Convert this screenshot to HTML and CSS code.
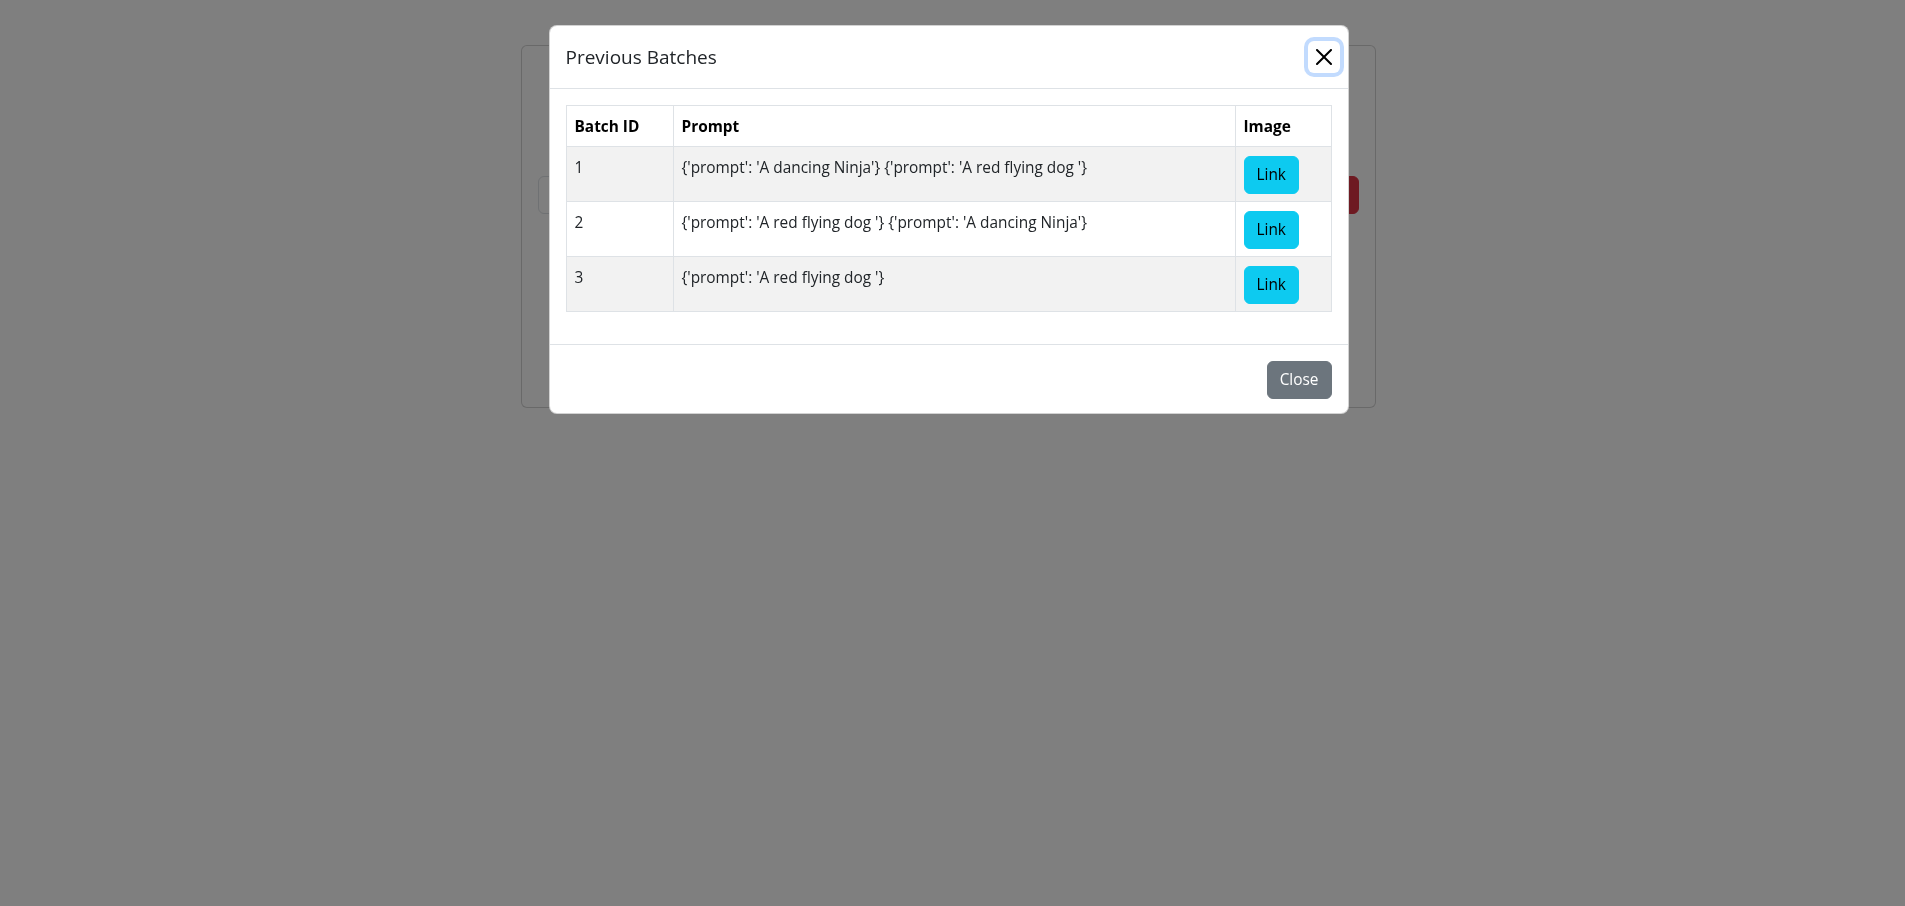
FILE: index.html
```html
<!DOCTYPE html>
<html lang="en">
<head>
<meta charset="utf-8">
<title>Batches</title>
<link rel="stylesheet" href="styles.css">
</head>
<body>
<div class="page">
  <div class="card">
    <div class="card-body">
      <h2 class="card-title">Image Generator</h2>
      <p class="card-text">Enter a prompt to generate a new batch of images.</p>
      <div class="input-group">
        <input class="form-control" type="text" placeholder="Enter a prompt">
        <button class="btn btn-danger" type="button">Generate</button>
      </div>
      <div class="card-actions">
        <button class="btn btn-primary" type="button">Previous Batches</button>
      </div>
    </div>
  </div>
</div>

<div class="backdrop"></div>

<div class="modal">
  <div class="modal-dialog">
    <div class="modal-content">
      <div class="modal-header">
        <h5 class="modal-title">Previous Batches</h5>
        <button class="btn-close" type="button" aria-label="Close">
          <svg viewBox="0 0 16 16" width="16" height="16" aria-hidden="true"><path d="M.293.293a1 1 0 0 1 1.414 0L8 6.586 14.293.293a1 1 0 1 1 1.414 1.414L9.414 8l6.293 6.293a1 1 0 0 1-1.414 1.414L8 9.414l-6.293 6.293a1 1 0 0 1-1.414-1.414L6.586 8 .293 1.707a1 1 0 0 1 0-1.414z"/></svg>
        </button>
      </div>
      <div class="modal-body">
        <table class="table">
          <thead>
            <tr><th class="col-id">Batch ID</th><th>Prompt</th><th class="col-img">Image</th></tr>
          </thead>
          <tbody>
            <tr><td>1</td><td>{'prompt': 'A dancing Ninja'} {'prompt': 'A red flying dog '}</td><td><button class="btn btn-info" type="button">Link</button></td></tr>
            <tr><td>2</td><td>{'prompt': 'A red flying dog '} {'prompt': 'A dancing Ninja'}</td><td><button class="btn btn-info" type="button">Link</button></td></tr>
            <tr><td>3</td><td>{'prompt': 'A red flying dog '}</td><td><button class="btn btn-info" type="button">Link</button></td></tr>
          </tbody>
        </table>
      </div>
      <div class="modal-footer">
        <button class="btn btn-secondary" type="button">Close</button>
      </div>
    </div>
  </div>
</div>
</body>
</html>
```
FILE: styles.css
```css
* { box-sizing: border-box; }

body {
  margin: 0;
  background: #fff;
  font-family: "Open Sans", "Noto Sans", sans-serif;
  font-size: 15.4px;
  line-height: 24px;
  color: #212529;
}

.page {
  padding: 45px 8px 0 0;
}

.card {
  width: 855px;
  height: 363px;
  margin: 0 auto;
  border: 1px solid rgba(0, 0, 0, 0.175);
  border-radius: 6px;
  background: #fff;
}

.card-body {
  padding: 16px;
}

.card-title {
  margin: 20px 0 10px;
  font-size: 28px;
  font-weight: 500;
  line-height: 36px;
  text-align: center;
}

.card-text {
  margin: 0 0 24px;
  text-align: center;
}

.input-group {
  display: flex;
}

.form-control {
  flex: 1;
  height: 38px;
  padding: 6px 12px;
  border: 1px solid #dee2e6;
  border-radius: 6px 0 0 6px;
  font: inherit;
  color: #212529;
}

.btn {
  display: inline-block;
  padding: 6px 12px;
  border: 1px solid transparent;
  border-radius: 6px;
  font-family: inherit;
  font-size: 15.4px;
  line-height: 24px;
  cursor: pointer;
}

.input-group .btn {
  border-radius: 0 6px 6px 0;
}

.btn-danger { background: #dc3545; border-color: #dc3545; color: #fff; }
.btn-primary { background: #0d6efd; border-color: #0d6efd; color: #fff; }
.btn-info { background: #0dcaf0; border-color: #0dcaf0; color: #000; }
.btn-secondary { background: #6c757d; border-color: #6c757d; color: #fff; }

.card-actions {
  margin-top: 60px;
  text-align: center;
}

.backdrop {
  position: fixed;
  inset: 0;
  background: rgba(0, 0, 0, 0.5);
}

.modal {
  position: fixed;
  inset: 0;
  padding-right: 8px;
}

.modal-dialog {
  width: 800px;
  margin: 25px auto 0;
}

.modal-content {
  background: #fff;
  border: 1px solid rgba(0, 0, 0, 0.175);
  border-radius: 8px;
}

.modal-header {
  display: flex;
  align-items: center;
  padding: 16px;
  border-bottom: 1px solid #dee2e6;
}

.modal-title {
  margin: 0;
  font-size: 19px;
  font-weight: 500;
  line-height: 30px;
  color: #212529;
}

.btn-close {
  display: flex;
  align-items: center;
  justify-content: center;
  width: 32px;
  height: 32px;
  margin: -8px -8px -8px auto;
  padding: 8px;
  border: 0;
  border-radius: 6px;
  background: #fff;
  box-shadow: 0 0 0 4px rgba(13, 110, 253, 0.25);
  cursor: pointer;
}

.btn-close svg {
  display: block;
  fill: #000;
}

.modal-body {
  padding: 16px;
}

.table {
  width: 100%;
  margin-bottom: 16px;
  border-collapse: collapse;
  border: 1px solid #dee2e6;
}

.table th,
.table td {
  padding: 9px 8px 7px;
  border: 1px solid #dee2e6;
  text-align: left;
  vertical-align: top;
}

.table th {
  font-weight: 700;
  color: #000;
}

.table .col-id { width: 107px; }
.table .col-img { width: 96px; }

.table tbody tr:nth-child(odd) td {
  background: #f2f2f2;
}

.modal-footer {
  display: flex;
  justify-content: flex-end;
  padding: 12px 12px 10px;
  border-top: 1px solid #dee2e6;
}

.modal-footer .btn {
  margin: 4px;
}
```
